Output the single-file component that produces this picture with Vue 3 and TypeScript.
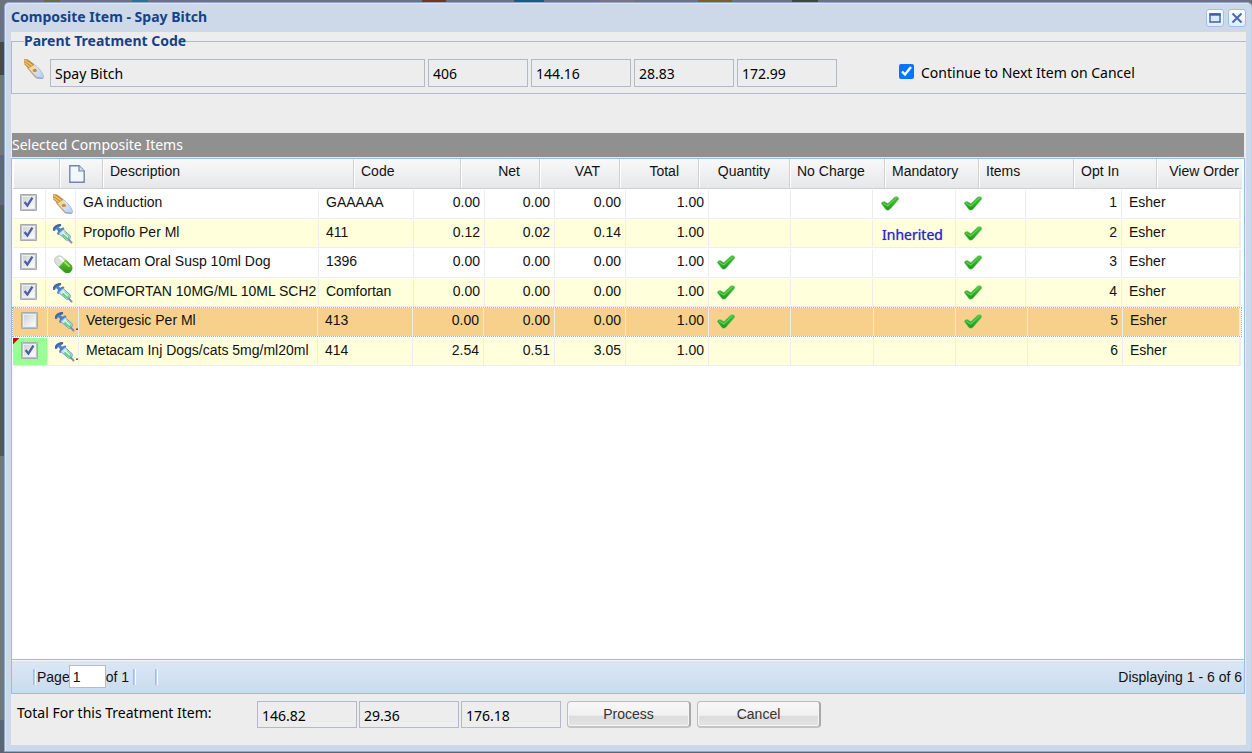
<script setup lang="ts">
import { ref } from 'vue'

type IconKind = 'scalpel' | 'syringe' | 'pill'

interface Item {
  selected: boolean
  icon: IconKind
  description: string
  code: string
  net: string
  vat: string
  total: string
  quantity: string
  charged: boolean
  noCharge: boolean
  mandatory: '' | 'yes' | 'inherited'
  items: boolean
  order: number
  site: string
  optional?: boolean
  highlighted?: boolean
  dirty?: boolean
}

const parent = ref({ name: 'Spay Bitch', code: '406', net: '144.16', vat: '28.83', total: '172.99' })
const totals = ref({ net: '146.82', vat: '29.36', total: '176.18' })
const continueNext = ref(true)
const page = ref('1')

const items = ref<Item[]>([
  { selected: true, icon: 'scalpel', description: 'GA induction', code: 'GAAAAA', net: '0.00', vat: '0.00', total: '0.00', quantity: '1.00', charged: false, noCharge: false, mandatory: 'yes', items: true, order: 1, site: 'Esher' },
  { selected: true, icon: 'syringe', description: 'Propoflo Per Ml', code: '411', net: '0.12', vat: '0.02', total: '0.14', quantity: '1.00', charged: false, noCharge: false, mandatory: 'inherited', items: true, order: 2, site: 'Esher' },
  { selected: true, icon: 'pill', description: 'Metacam Oral Susp 10ml Dog', code: '1396', net: '0.00', vat: '0.00', total: '0.00', quantity: '1.00', charged: true, noCharge: false, mandatory: '', items: true, order: 3, site: 'Esher' },
  { selected: true, icon: 'syringe', description: 'COMFORTAN 10MG/ML 10ML SCH2', code: 'Comfortan', net: '0.00', vat: '0.00', total: '0.00', quantity: '1.00', charged: true, noCharge: false, mandatory: '', items: true, order: 4, site: 'Esher' },
  { selected: false, icon: 'syringe', description: 'Vetergesic Per Ml', code: '413', net: '0.00', vat: '0.00', total: '0.00', quantity: '1.00', charged: true, noCharge: false, mandatory: '', items: true, order: 5, site: 'Esher', optional: true, highlighted: true },
  { selected: true, icon: 'syringe', description: 'Metacam Inj Dogs/cats 5mg/ml20ml', code: '414', net: '2.54', vat: '0.51', total: '3.05', quantity: '1.00', charged: false, noCharge: false, mandatory: '', items: false, order: 6, site: 'Esher', optional: true, dirty: true },
])

const columns: { label: string; align?: 'right' | 'end' }[] = [
  { label: 'Description' },
  { label: 'Code' },
  { label: 'Net', align: 'right' },
  { label: 'VAT', align: 'right' },
  { label: 'Total', align: 'right' },
  { label: 'Quantity', align: 'right' },
  { label: 'No Charge' },
  { label: 'Mandatory' },
  { label: 'Items' },
  { label: 'Opt In' },
  { label: 'View Order', align: 'end' },
]
</script>

<template>
  <div class="backdrop">
    <svg class="defs" width="0" height="0" aria-hidden="true">
      <defs>
        <linearGradient id="g-tick" x1="0" y1="0" x2="0" y2="1">
          <stop offset="0" stop-color="#46c238" /><stop offset="1" stop-color="#1d991b" />
        </linearGradient>
        <linearGradient id="g-pill" x1="0" y1="0" x2="1" y2="1">
          <stop offset="0" stop-color="#6cc92f" /><stop offset="1" stop-color="#228a12" />
        </linearGradient>
        <linearGradient id="g-blade" x1="0" y1="0" x2="1" y2="1">
          <stop offset="0" stop-color="#f0dcb4" /><stop offset="0.4" stop-color="#d3e5f9" /><stop offset="1" stop-color="#b3cdf0" />
        </linearGradient>
        <linearGradient id="g-box" x1="0" y1="0" x2="1" y2="1">
          <stop offset="0" stop-color="#cfd2d6" /><stop offset="1" stop-color="#fdfdfd" />
        </linearGradient>
        <symbol id="scalpel" viewBox="0 0 20 20">
          <path d="M3.4 8.4 L9 4.6 L13 7.6 Q18.4 12.6 19.8 17.4 Q19.8 19.6 17.6 19.6 L11.6 18.6Z" fill="url(#g-blade)" stroke="#a9adc4" stroke-width=".7" />
          <path d="M0 0 L4 .4 L9.8 5 L9 9 L4.6 9.4 L.4 5.4Z" fill="#c58a34" />
          <path d="M.4 1 L8 6.4 M.8 4 L6 8" stroke="#e9c67c" stroke-width="1.3" />
          <path d="M4.4 9.4 L9 6.4 L13 9.8 L13.2 13.4 L9.6 13.6Z" fill="#f0d9a2" />
          <ellipse cx="10.8" cy="11.4" rx="2" ry="1.6" fill="#c68d38" />
          <path d="M3.6 8.8 L12 18.4" stroke="#cfa170" stroke-width="1.2" />
          <path d="M12 18.8 L18.6 19.3" stroke="#8397c8" stroke-width="1.1" />
        </symbol>
        <symbol id="syringe" viewBox="0 0 20 20">
          <path d="M1.2 5.6 Q1.2 2.8 6.8 1.2" fill="none" stroke="#44659f" stroke-width="2.8" stroke-linecap="round" />
          <path d="M3.6 3.4 L8 7.6" stroke="#4a83cc" stroke-width="3.2" />
          <path d="M5.2 9.8 Q6 6.2 10.2 4.6" fill="none" stroke="#4a7fc6" stroke-width="2.2" stroke-linecap="round" />
          <path d="M5.8 9.6 L10 5.4 L17.2 11.8 Q18 16 13.8 16.4Z" fill="#cbe8f6" stroke="#6f9dcb" stroke-width="1" />
          <path d="M8.6 11.2 L12 8.2 L16.4 12.4 Q16.6 15.4 13.8 15.6Z" fill="#62d080" />
          <path d="M9.6 8.2 L15 13.2" stroke="#e0fae6" stroke-width="1.5" />
          <path d="M15.4 15.2 L19 19.2" stroke="#7f8da6" stroke-width="2" />
        </symbol>
        <symbol id="pill" viewBox="0 0 20 20">
          <g transform="rotate(43 10 11)">
            <rect x="0.2" y="6.2" width="20.2" height="9.6" rx="4.8" fill="#d9dfd9" stroke="#b4bdb4" stroke-width=".7" />
            <path d="M9 5.9 H16 A5.1 5.1 0 0 1 16 16.1 H9Z" fill="url(#g-pill)" />
            <path d="M3.4 8.6 H8" stroke="#fff" stroke-width="2" stroke-linecap="round" />
            <path d="M10.2 8.5 H16" stroke="#a6e66c" stroke-width="1.6" stroke-linecap="round" />
          </g>
        </symbol>
        <symbol id="tick" viewBox="0 0 18 15">
          <path d="M.2 7.4 Q1.2 4.8 3.6 5.6 L6.9 7.6 L13.6 1 Q16.6 -.6 17.9 2.2 Q18 3.2 17.2 4 L8.8 13.6 Q6.6 15.2 4.8 13.4Z" fill="url(#g-tick)" stroke="#8fd184" stroke-width=".4" />
          <path d="M2.4 7.2 L6.8 10 L15.2 2.2" fill="none" stroke="#67d058" stroke-width="1.1" stroke-linecap="round" />
        </symbol>
      </defs>
    </svg>

    <main class="window">
      <header class="titlebar">
        <h1>Composite Item - Spay Bitch</h1>
        <button type="button" class="tool" aria-label="Maximise">
          <svg width="12" height="12" viewBox="0 0 12 12"><path d="M1 2H11V10H1Z" fill="#dcebfb" stroke="#3f5fa8" stroke-width="1.4" /><path d="M.5 2.5H11.5" stroke="#3f5fa8" stroke-width="2.4" /></svg>
        </button>
        <button type="button" class="tool" aria-label="Close">
          <svg width="12" height="12" viewBox="0 0 12 12"><path d="M1.5 1.5L10.5 10.5M10.5 1.5L1.5 10.5" stroke="#4a68ae" stroke-width="2" /></svg>
        </button>
      </header>

      <div class="content">
        <fieldset class="parent">
          <legend>Parent Treatment Code</legend>
          <div class="parent-row">
            <svg class="icon parent-icon" aria-hidden="true"><use href="#scalpel" /></svg>
            <input v-model="parent.name" class="field name" aria-label="Treatment" readonly />
            <input v-model="parent.code" class="field" aria-label="Code" readonly />
            <input v-model="parent.net" class="field" aria-label="Net" readonly />
            <input v-model="parent.vat" class="field" aria-label="VAT" readonly />
            <input v-model="parent.total" class="field" aria-label="Total" readonly />
            <label class="continue"><input v-model="continueNext" type="checkbox" /><span>Continue to Next Item on Cancel</span></label>
          </div>
        </fieldset>

        <section class="panel">
          <h2>Selected Composite Items</h2>
          <div class="grid">
            <div class="scroller">
              <table>
                <thead>
                  <tr>
                    <th aria-label="Selected"></th>
                    <th class="doc" aria-label="Type">
                      <svg width="16" height="18" viewBox="0 0 16 18"><path d="M.8 .8H10L15.2 6V17.2H.8Z" fill="#f2f7fc" stroke="#7186ad" stroke-width="1.4" /><path d="M10 .8V6H15.2" fill="#cfdcec" stroke="#7186ad" stroke-width="1.2" /></svg>
                    </th>
                    <th v-for="c in columns" :key="c.label" :class="c.align">{{ c.label }}</th>
                  </tr>
                </thead>
                <tbody>
                  <tr v-for="item in items" :key="item.order" :class="{ optional: item.optional, highlighted: item.highlighted }">
                    <td class="select" :class="{ dirty: item.dirty }">
                      <label class="box">
                        <input v-model="item.selected" type="checkbox" :aria-label="item.description" />
                        <svg width="17" height="17" viewBox="0 0 17 17" aria-hidden="true">
                          <path d="M.5 .5H16.5V16.5H.5Z" fill="#eceef1" stroke="#a6abb0" />
                          <path d="M1.5 1.5H15.5V15.5H1.5Z" fill="none" stroke="#bcc0c5" />
                          <path d="M3 3H14V14H3Z" fill="url(#g-box)" />
                          <path v-if="item.selected" d="M4.6 8 L7.4 11.6 L12.4 3.6" fill="none" stroke="#4a5f9f" stroke-width="2.3" />
                        </svg>
                      </label>
                    </td>
                    <td class="type"><svg class="icon" aria-hidden="true"><use :href="'#' + item.icon" /></svg><span v-if="item.optional">.</span></td>
                    <td>{{ item.description }}</td>
                    <td>{{ item.code }}</td>
                    <td class="num">{{ item.net }}</td>
                    <td class="num">{{ item.vat }}</td>
                    <td class="num">{{ item.total }}</td>
                    <td class="num">{{ item.quantity }}</td>
                    <td class="flag"><svg v-if="item.charged" class="tick" role="img" aria-label="Yes"><use href="#tick" /></svg></td>
                    <td class="flag"><svg v-if="item.noCharge" class="tick" role="img" aria-label="Yes"><use href="#tick" /></svg></td>
                    <td class="flag">
                      <svg v-if="item.mandatory === 'yes'" class="tick" role="img" aria-label="Yes"><use href="#tick" /></svg>
                      <span v-else-if="item.mandatory === 'inherited'" class="inherited">Inherited</span>
                    </td>
                    <td class="flag"><svg v-if="item.items" class="tick" role="img" aria-label="Yes"><use href="#tick" /></svg></td>
                    <td class="num">{{ item.order }}</td>
                    <td>{{ item.site }}</td>
                  </tr>
                </tbody>
              </table>
            </div>
            <footer class="paging">
              <i class="sep"></i>
              <label for="page">Page</label>
              <input id="page" v-model="page" />
              <span class="of">of 1</span>
              <i class="sep"></i>
              <i class="sep last"></i>
              <span class="status">Displaying 1 - 6 of 6</span>
            </footer>
          </div>
        </section>

        <section class="totals">
          <span class="caption">Total For this Treatment Item:</span>
          <input v-model="totals.net" class="field" aria-label="Net total" readonly />
          <input v-model="totals.vat" class="field" aria-label="VAT total" readonly />
          <input v-model="totals.total" class="field" aria-label="Grand total" readonly />
          <button type="button" class="action">Process</button>
          <button type="button" class="action">Cancel</button>
        </section>
      </div>
    </main>
  </div>
</template>

<style>
body {
  margin: 0;
}
</style>

<style scoped>
* {
  box-sizing: border-box;
}

.backdrop {
  display: flex;
  min-height: 100vh;
  padding: 2px 0 1px 4px;
  background:
    linear-gradient(90deg,
      transparent 44px, #6f6a3a 44px 60px, transparent 60px 132px,
      #2f6f94 132px 148px, transparent 148px 422px, #7a3413 422px 446px, transparent 446px 514px,
      #1c5a86 514px 544px, transparent 544px 600px, #77748a 600px 634px, transparent 634px 698px,
      #80601f 698px 732px, transparent 732px 792px, #3c4a33 792px 818px, transparent 818px) 0 0 / 100% 2px no-repeat,
    linear-gradient(180deg, #6b737c 42px, #4c4745 42px 75px, #737577 75px 155px, #5d6878 155px 205px, #57575a 205px 456px, #76777a 456px 720px, #5a6675 720px);
  font: 14px/18px "Liberation Sans", Arial, sans-serif;
  color: #111;
}

.defs {
  position: absolute;
}

.window {
  flex: 1;
  min-width: 0;
  display: flex;
  flex-direction: column;
  padding: 0 5px 6px 6px;
  border: 1px solid #8fa9cb;
  border-right-color: #c0d0e4;
  border-radius: 5px 5px 0 0;
  background: #cdd9e8;
  box-shadow: inset 1px 1px 0 #dfe8f2;
}

.titlebar {
  display: flex;
  align-items: center;
  gap: 4px;
  height: 29px;
}

h1,
legend {
  margin: 0;
  font: bold 14px/18px "Noto Sans", sans-serif;
  color: #15428b;
}

h1 {
  flex: 1;
  padding-bottom: 2px;
}

.tool {
  display: grid;
  place-items: center;
  width: 18px;
  height: 18px;
  padding: 0;
  border: 1px solid #9cc0ee;
  border-radius: 3px;
  background: linear-gradient(#fff, #e1edfa);
}

.content {
  flex: 1;
  display: flex;
  flex-direction: column;
  background: #ededed;
}

.parent {
  min-width: 0;
  margin: 0;
  padding: 0 0 0 12px;
  border: 1px solid #b5b8c8;
  border-right: 0;
}

legend {
  padding: 0;
}

.parent-row {
  display: flex;
  align-items: center;
  gap: 3px;
  padding: 9px 0 6px;
}

.icon {
  display: block;
  flex: none;
  width: 20px;
  height: 20px;
}

.parent-icon {
  align-self: flex-start;
  margin-right: 3px;
}

.field {
  width: 100px;
  height: 28px;
  padding: 1px 4px 0;
  border: 1px solid #b5b8c8;
  border-radius: 0;
  background: #ededed;
  font: 14px/20px "Noto Sans", sans-serif;
  color: #000;
}

.name {
  width: 375px;
}

.continue {
  display: flex;
  gap: 7px;
  margin-left: 59px;
  font: 14px/20px "Noto Sans", sans-serif;
  color: #000;
}

.continue input {
  width: 15px;
  height: 15px;
  margin: 1px 0 0;
  accent-color: #0075ff;
}

.panel {
  flex: 1;
  display: flex;
  flex-direction: column;
  margin: 39px 1px 0 0;
}

h2 {
  margin: 0 1px;
  border-bottom: 1px solid #dfe8f6;
  background: #909090;
  font: 14px/24px "Noto Sans", sans-serif;
  color: #fff;
}

.grid {
  flex: 1;
  display: flex;
  flex-direction: column;
  border: 1px solid #99bbe8;
  background: #fff;
}

.scroller {
  flex: 1;
  padding: 0 2px 0 1px;
}

table,
thead,
tbody {
  display: block;
}

tr {
  display: grid;
}

thead tr {
  grid-template-columns: 47fr 43fr 251fr 107fr 79fr 80fr 79fr 91fr 95fr 94fr 95fr 83fr 85fr;
}

tbody tr {
  grid-template-columns: 33fr 30fr 243fr 95fr 71fr 70fr 71fr 83fr 82fr 82fr 83fr 70fr 96fr 119fr;
  height: 30px;
  margin-right: 1px;
  border-top: 1px solid #fff;
  border-bottom: 1px solid #ededed;
}

tbody tr:nth-child(even) {
  height: 29px;
}

tbody tr.optional {
  grid-template-columns: 35fr 31fr 239fr 95fr 71fr 71fr 71fr 83fr 82fr 83fr 82fr 72fr 95fr 118fr;
}

th {
  min-width: 0;
  height: 30px;
  padding: 3px 7px 0 7px;
  border: solid #d0d0d0;
  border-width: 0 1px 1px 0;
  box-shadow: inset 1px 0 0 #fff;
  background: linear-gradient(#f9f9f9, #e6e7ea);
  font-weight: normal;
  text-align: left;
  white-space: nowrap;
}

th.right {
  padding-right: 19px;
  text-align: right;
}

th.end {
  padding-right: 3px;
  border-right: 0;
  text-align: right;
}

th.doc {
  padding-left: 9px;
}

th.doc svg {
  display: block;
  margin-top: 3px;
}

td {
  min-width: 0;
  padding: 3px 0 0 7px;
  border-right: 1px solid #ededed;
  overflow: hidden;
  white-space: nowrap;
}

td:last-child {
  border-right-width: 2px;
}

tbody tr:nth-child(even) td,
tbody tr.optional td {
  background: #ffffdc;
}

tbody tr.highlighted {
  margin: 0 0 0 -1px;
  border: 1px dotted #8fb0e2;
}

tbody tr.highlighted td {
  background: #f7d18b;
}

tbody tr td.dirty {
  background: linear-gradient(135deg, #c00 4px, #9aff94 5px);
}

td.num {
  padding-right: 4px;
  text-align: right;
}

td.select,
td.type {
  padding-top: 4px;
}

.optional td.select {
  padding-left: 8px;
}

.box {
  display: grid;
  width: 17px;
  height: 17px;
}

.box input,
.box svg {
  grid-area: 1 / 1;
  width: 17px;
  height: 17px;
  margin: 0;
}

.box input {
  appearance: none;
}

.type {
  display: flex;
}

.type span {
  padding-top: 4px;
}

td.flag {
  padding-left: 8px;
}

.tick {
  display: block;
  width: 18px;
  height: 15px;
  margin-top: 3px;
}

.inherited {
  display: block;
  padding: 3px 0 0 1px;
  font: 14px/18px "Noto Sans", sans-serif;
  color: #2b25c4;
  text-shadow: 0 0 1px #6d69dd;
}

.paging {
  display: flex;
  align-items: center;
  height: 34px;
  padding: 0 2px 0 21px;
  border-top: 1px solid #99bbe8;
  background: linear-gradient(#dbe7f5, #cbdbed);
  box-shadow: inset 0 1px 0 #f0f5fb;
}

.sep {
  width: 3px;
  height: 16px;
  border-left: 1px solid #98c0f4;
  border-right: 1px solid #fff;
  background: #b4d2f8;
}

.paging label {
  margin-left: 1px;
}

.paging input {
  width: 37px;
  height: 23px;
  margin-left: -1px;
  padding: 0 3px;
  border: 1px solid #b9bcc0;
  background: #fff;
  font: inherit;
  color: #111;
}

.of {
  margin-right: 4px;
}

.last {
  margin-left: 19px;
}

.status {
  margin-left: auto;
}

.totals {
  display: flex;
  gap: 2px;
  height: 51px;
  padding: 7px 0 0 6px;
}

.caption {
  width: 238px;
  font: 14px/24px "Noto Sans", sans-serif;
  color: #000;
}

.totals .field {
  height: 27px;
}

.action {
  width: 124px;
  height: 27px;
  margin-left: 4px;
  padding: 0;
  border: 1px solid #b0b0b0;
  border-width: 1px 2px 2px 1px;
  border-color: #bcbcbc #a8a8a8 #c4c4c4 #bcbcbc;
  border-radius: 4px;
  background: linear-gradient(#f8f8f8, #f0f0f0 55%, #dcdcdc 60%, #e4e4e4);
  box-shadow: inset 0 0 0 1px #f6f6f6;
  font: 14px/18px "Liberation Sans", Arial, sans-serif;
  color: #333;
}
</style>
